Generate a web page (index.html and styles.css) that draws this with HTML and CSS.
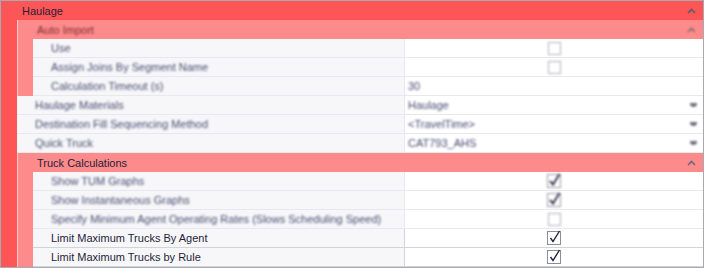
FILE: index.html
```html
<!DOCTYPE html>
<html lang="en">
<head>
    <meta charset="UTF-8">
    <title>Haulage</title>
    <link rel="stylesheet" href="styles.css">
</head>
<body>

    <div class="grid">
        <div class="cat top">
            <span class="cat-name">Haulage</span>
            <svg class="chev" width="9" height="6" viewBox="0 0 9 6"><path d="M1 5 L4.5 1.5 L8 5" fill="none" stroke="#5a5a6e" stroke-width="1.6"/></svg>
        </div>
        <div class="cat-body">
            <div class="strip red"></div>
            <div class="rows">

                <div class="cat sub">
                    <span class="cat-name dim red-text">Auto Import</span>
                    <svg class="chev dim" width="9" height="6" viewBox="0 0 9 6"><path d="M1 5 L4.5 1.5 L8 5" fill="none" stroke="#7a6a72" stroke-width="1.6"/></svg>
                </div>
                <div class="cat-body">
                    <div class="strip pink"></div>
                    <div class="rows">
                        <div class="row soft">
                            <div class="label"><span class="dim">Use</span></div>
                            <div class="value center"><span class="box dim"></span></div>
                        </div>
                        <div class="row soft">
                            <div class="label"><span class="dim">Assign Joins By Segment Name</span></div>
                            <div class="value center"><span class="box dim"></span></div>
                        </div>
                        <div class="row soft">
                            <div class="label"><span class="dim">Calculation Timeout (s)</span></div>
                            <div class="value"><span class="dim">30</span></div>
                        </div>
                    </div>
                </div>

                <div class="row soft">
                    <div class="label"><span class="dim">Haulage Materials</span></div>
                    <div class="value"><span class="dim">Haulage</span><span class="drop dim"></span></div>
                </div>
                <div class="row soft">
                    <div class="label"><span class="dim">Destination Fill Sequencing Method</span></div>
                    <div class="value"><span class="dim">&lt;TravelTime&gt;</span><span class="drop dim"></span></div>
                </div>
                <div class="row soft">
                    <div class="label"><span class="dim">Quick Truck</span></div>
                    <div class="value"><span class="dim">CAT793_AHS</span><span class="drop dim"></span></div>
                </div>

                <div class="cat sub">
                    <span class="cat-name">Truck Calculations</span>
                    <svg class="chev" width="9" height="6" viewBox="0 0 9 6"><path d="M1 5 L4.5 1.5 L8 5" fill="none" stroke="#6a6a7c" stroke-width="1.6"/></svg>
                </div>
                <div class="cat-body">
                    <div class="strip pink"></div>
                    <div class="rows">
                        <div class="row soft">
                            <div class="label"><span class="dim">Show TUM Graphs</span></div>
                            <div class="value center"><span class="check dim"><svg width="15" height="16" viewBox="0 0 15 16"><rect x="0.5" y="2.5" width="13" height="13" fill="#fff" stroke="#9a9aa8"/><path d="M3 9 L6 12.5 L12.5 2" fill="none" stroke="#40405a" stroke-width="2"/></svg></span></div>
                        </div>
                        <div class="row soft">
                            <div class="label"><span class="dim">Show Instantaneous Graphs</span></div>
                            <div class="value center"><span class="check dim"><svg width="15" height="16" viewBox="0 0 15 16"><rect x="0.5" y="2.5" width="13" height="13" fill="#fff" stroke="#9a9aa8"/><path d="M3 9 L6 12.5 L12.5 2" fill="none" stroke="#40405a" stroke-width="2"/></svg></span></div>
                        </div>
                        <div class="row soft">
                            <div class="label"><span class="dim">Specify Minimum Agent Operating Rates (Slows Scheduling Speed)</span></div>
                            <div class="value center"><span class="box dim"></span></div>
                        </div>
                        <div class="row">
                            <div class="label">Limit Maximum Trucks By Agent</div>
                            <div class="value center"><span class="check"><svg width="15" height="16" viewBox="0 0 15 16"><rect x="0.5" y="2.5" width="13" height="13" fill="#fff" stroke="#8c8c9c"/><path d="M3.5 9 L6 12.5 L12.5 2" fill="none" stroke="#22223a" stroke-width="1.4"/></svg></span></div>
                        </div>
                        <div class="row">
                            <div class="label">Limit Maximum Trucks by Rule</div>
                            <div class="value center"><span class="check"><svg width="15" height="16" viewBox="0 0 15 16"><rect x="0.5" y="2.5" width="13" height="13" fill="#fff" stroke="#8c8c9c"/><path d="M3.5 9 L6 12.5 L12.5 2" fill="none" stroke="#22223a" stroke-width="1.4"/></svg></span></div>
                        </div>
                    </div>
                </div>

            </div>
        </div>
    </div>

</body>
</html>
```

FILE: styles.css
```css
body { margin: 0; background: #fff; font-family: "Liberation Sans", Arial, sans-serif; font-size: 11px; color: #1e1e38; }
.grid { width: 704px; height: 268px; box-sizing: border-box; border: 1px solid #a9a9b3; overflow: hidden; }

.cat { height: 19px; display: flex; align-items: center; justify-content: space-between; padding-right: 7px; }
.cat.top { background: #fe5656; padding-left: 21px; font-size: 11px; }
.cat.sub { background: #fe8b8b; padding-left: 19px; border-left: 1px solid #ffc9c9; font-size: 11px; }
.chev { display: block; }

.cat-body { display: flex; }
.strip { flex: none; }
.strip.red { width: 16px; background: #fe5656; }
.strip.pink { width: 15px; background: #fe8b8b; border-left: 1px solid #ffc9c9; }
.rows { flex: 1; min-width: 0; }

.row { display: flex; height: 18px; border-bottom: 1px solid #d3d3db; }
.row.soft { border-bottom-color: #e8e8ee; }
.label { flex: 1; min-width: 0; background: #f7f7f9; padding-left: 18px; line-height: 18px; white-space: nowrap; overflow: hidden; font-size: 11px; }
.value { width: 299px; flex: none; background: #fff; border-left: 1px solid #d3d3db; display: flex; align-items: center; justify-content: space-between; padding: 0 6px 0 3px; box-sizing: border-box; font-size: 11px; }
.row.soft .value { border-left-color: #e8e8ee; }
.value.center { justify-content: center; padding: 0; }

.dim { display: inline-block; filter: blur(0.8px); color: #4a4a72; }
.red-text { color: #7a2836; }
.box { display: block; width: 11px; height: 11px; border: 1px solid #b0b0bc; background: #fff; }
.check { display: block; height: 16px; margin-top: -2px; }
.check svg { display: block; }
.drop { display: block; width: 7px; height: 4px; background: #70707e; border-radius: 0 0 4px 4px; }
```
